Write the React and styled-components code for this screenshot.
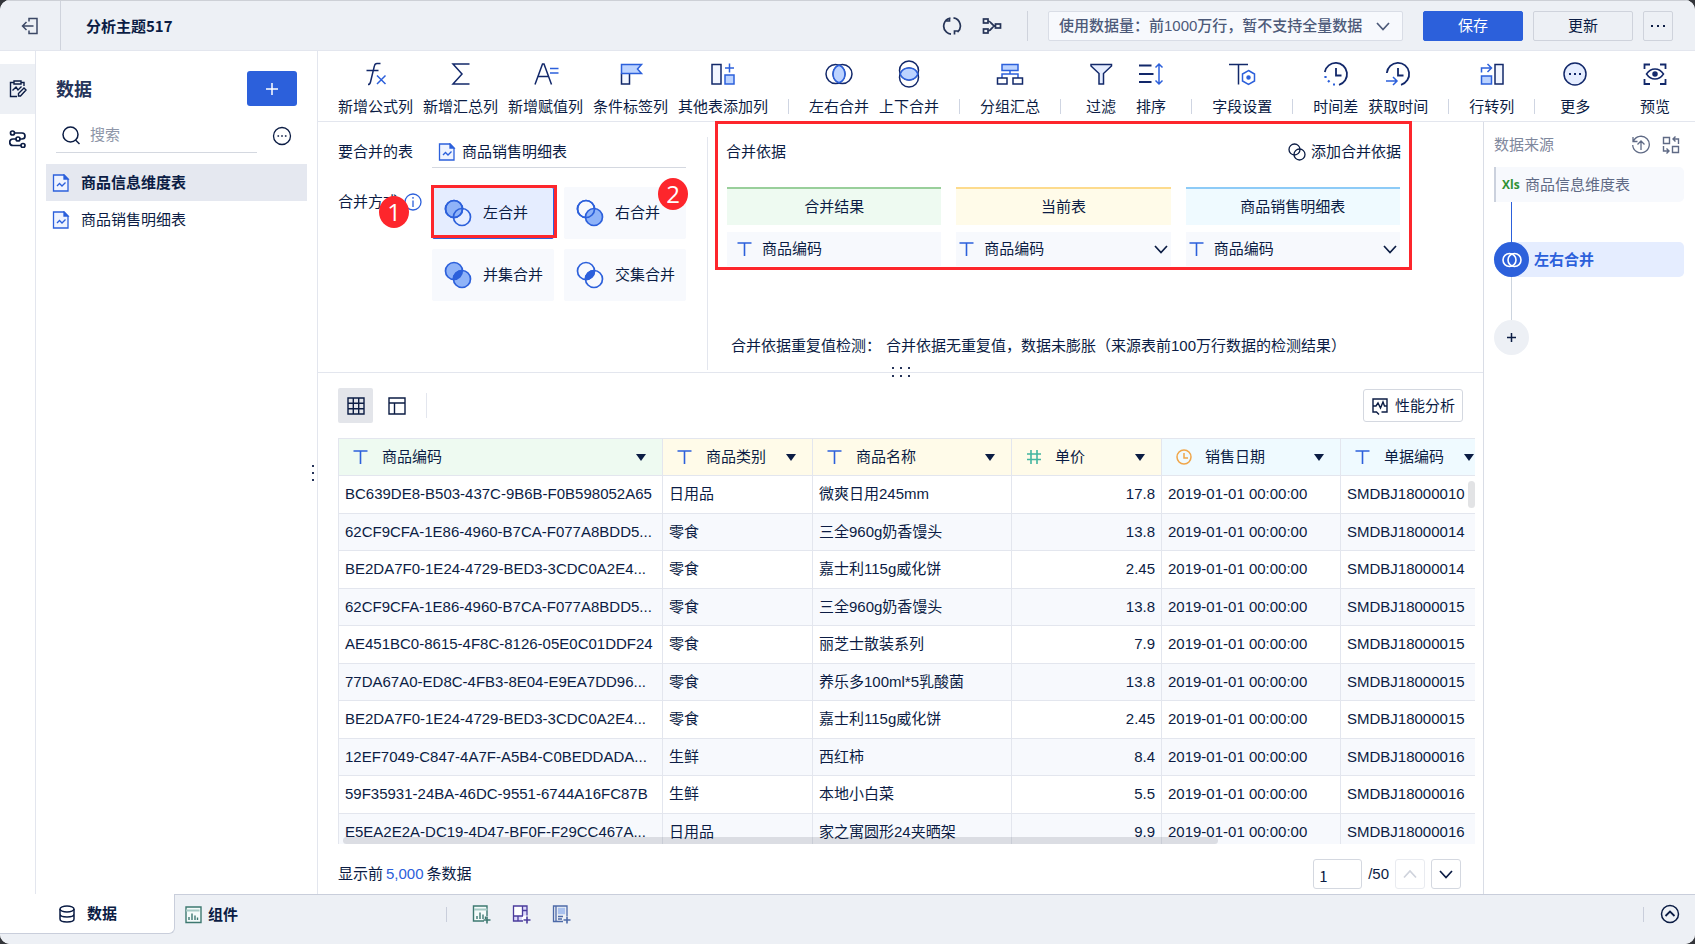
import React, { useState } from "react";
import styled, { createGlobalStyle, css } from "styled-components";

const NAVY = "#12286a";
const INK = "#0b1c44";
const BLUE = "#2c60db";
const LIGHT = "#bcd3ff";
const LINE = "#e3e6ee";

/* ---------- icons ---------- */

const Icon = ({ size = 20, box = size, color = INK, width = 1.5, children }) => (
  <svg width={size} height={size} viewBox={`0 0 ${box} ${box}`} fill="none"
    stroke={color} strokeWidth={width} aria-hidden="true">
    {children}
  </svg>
);

const Tool = ({ children }) => <Icon size={28} color={NAVY}>{children}</Icon>;

const toolIcons = {
  formula: (
    <Tool>
      <path d="M18.5 3.5H15c-1.6 0-2.3 1-2.6 2.4L8.5 22c-.3 1.5-.8 2.5-2.5 2.5M4.500 10.5h12" />
      <path d="M15 15.5l8.5 8.5M23.5 15.5L15 24" stroke={BLUE} />
    </Tool>
  ),
  sum: <Tool><path d="M22.5 4H6l9 10-9 10h16.5" /></Tool>,
  assign: (
    <Tool>
      <path d="M3 24.5L10.500 4H12l7.5 20.500M6 16.5h11" />
      <path d="M18 8.5h8.500M18 13h8.500" stroke={BLUE} />
    </Tool>
  ),
  flag: (
    <Tool>
      <path d="M4.500 13.5V24h8V13.5" fill="#f2f6ff" />
      <path d="M4.500 4.5h20l-4 4.500 4 4.500h-20z" fill={LIGHT} stroke={BLUE} />
    </Tool>
  ),
  addColumn: (
    <Tool>
      <rect x="3" y="4.5" width="9" height="19.5" fill="#f2f6ff" />
      <path d="M20.500 3.5v9M16 8h9" stroke={BLUE} />
      <rect x="16" y="15" width="9" height="9" fill={LIGHT} stroke={BLUE} />
    </Tool>
  ),
  joinH: (
    <Tool>
      <circle cx="10.5" cy="14" r="9.5" /><circle cx="17.5" cy="14" r="9.5" />
      <path d="M14 5.200a9.5 9.5 0 0 1 0 17.600a9.5 9.5 0 0 1 0-17.600z" fill={LIGHT} stroke={BLUE} />
    </Tool>
  ),
  joinV: (
    <Tool>
      <g transform="rotate(90 14 14)">
        <circle cx="10.5" cy="14" r="9.5" /><circle cx="17.5" cy="14" r="9.5" />
        <path d="M14 5.200a9.5 9.5 0 0 1 0 17.600a9.5 9.5 0 0 1 0-17.600z" fill={LIGHT} stroke={BLUE} />
      </g>
    </Tool>
  ),
  group: (
    <Tool>
      <rect x="6" y="4.5" width="16" height="6" fill={LIGHT} stroke={BLUE} />
      <path d="M14 10.5V14M6 18v-4h16v4" stroke={BLUE} />
      <rect x="1.5" y="18" width="9.5" height="6" /><rect x="17" y="18" width="9.5" height="6" />
    </Tool>
  ),
  filter: (
    <Tool><path d="M4 4.5h20.5V6l-8 7.5V24H12V13.5L4 6z" fill="#e5edff" /></Tool>
  ),
  sort: (
    <Tool>
      <path d="M2 5.5h12.5M2 14h14.5M2 22h12.5" strokeWidth="1.8" />
      <path d="M22 4v20M18.5 7.5L22 4l3.5 3.5M18.5 20.5L22 24l3.5-3.5" stroke={BLUE} />
    </Tool>
  ),
  field: (
    <Tool>
      <path d="M1 4.5h19M10.5 4.5v20" />
      <path d="M20.5 10.5l6 3.500v7l-6 3.500-6-3.500v-7z" stroke={BLUE} />
      <circle cx="20.5" cy="17.5" r="1.5" fill={BLUE} stroke={BLUE} />
    </Tool>
  ),
  timeDiff: (
    <Tool>
      <path d="M2.800 12A11.200 11.200 0 1 1 17 24.800" strokeWidth="1.8" />
      <path d="M14 8v7.5h5.5" strokeWidth="1.8" />
      <path d="M3.5 16v2M6 20.5L7.5 22M11 24.5h2" stroke={BLUE} strokeWidth="2.2" />
    </Tool>
  ),
  getTime: (
    <Tool>
      <path d="M2.800 13A11.200 11.200 0 1 1 17 24.800" strokeWidth="1.8" />
      <path d="M14 8v7.5h5.5" strokeWidth="1.8" />
      <path d="M2 21h10.5M9 17l4 4-4 4" stroke={BLUE} />
    </Tool>
  ),
  pivot: (
    <Tool>
      <path d="M3.5 12.5V8h9M9.5 4l4 4-4 4" stroke={BLUE} />
      <rect x="3.5" y="16" width="10" height="8" fill={LIGHT} stroke={BLUE} />
      <rect x="17" y="4.5" width="8" height="19.5" fill="#f2f6ff" />
    </Tool>
  ),
  more: (
    <Tool>
      <circle cx="14" cy="14" r="11" fill="#e5edff" />
      <path d="M8 14h2M13 14h2M18 14h2" strokeWidth="2" />
    </Tool>
  ),
  preview: (
    <Tool>
      <path d="M3.5 9V4.5H9M19 4.5h5.5V9M24.5 19v5H19M9 24H3.5v-5" strokeWidth="1.8" />
      <path d="M5.5 14c2.5-3.700 5.200-5 8.500-5s6 1.300 8.500 5c-2.500 3.700-5.200 5-8.500 5s-6-1.300-8.500-5z" />
      <circle cx="14" cy="14" r="2" fill={NAVY} />
    </Tool>
  ),
};

const ExitIcon = () => (
  <Icon size={18} color="#3c4866">
    <path d="M8 4.500v-3h8v15H8v-3M12.500 9h-11M5.500 5l-4 4 4 4" />
  </Icon>
);

const SyncIcon = () => (
  <Icon color="#263457" width={1.7}>
    <path d="M4.500 16.200A8.200 8.200 0 0 1 8.500 2M3 5h4.500V1.500M11.500 1.900a8.200 8.200 0 0 1 4 14.300M17 15h-4.500v3.500M4.500 16.200a8.200 8.200 0 0 0 4.500 2" />
  </Icon>
);

const FlowIcon = () => (
  <Icon color="#263457" width={1.7}>
    <rect x="1.5" y="3" width="4.500" height="4" /><rect x="1.5" y="13" width="4.500" height="4" />
    <rect x="13.5" y="8" width="5" height="4" />
    <path d="M6 5c3.500 0 3.500 5 7.500 5M6 15c3.500 0 3.500-5 7.500-5" />
  </Icon>
);

const ClipboardIcon = () => (
  <Icon size={18} width={1.4}>
    <path d="M8 16.500H1.500v-14H5M12 2.500h3V6M5 1h7v3H5zM3.500 10.500L7 7l2 3 3.500-3.500" />
    <path d="M9.500 13.500l5.500-5.500 2 2-5.500 6H9.500z" />
  </Icon>
);

const NodesIcon = () => (
  <Icon size={18} width={1.7}>
    <circle cx="3.5" cy="3" r="2" /><circle cx="9" cy="9" r="2" /><circle cx="14" cy="15.5" r="2" />
    <path d="M5.5 3H13a3 3 0 0 1 0 6h-2M7 9H4a3.200 3.200 0 0 0 0 6.500h8" />
  </Icon>
);

const SearchIcon = () => (
  <Icon><circle cx="9.5" cy="9.5" r="7.5" /><path d="M14.5 15l4 4" /></Icon>
);

const DotsCircleIcon = () => (
  <Icon width={1.3}>
    <circle cx="10" cy="10" r="8.5" />
    <path d="M5.500 10h1.600M9.200 10h1.600M12.900 10h1.600" strokeWidth="1.6" />
  </Icon>
);

/* document page with a folded corner */
const SheetIcon = () => (
  <Icon size={18} color={BLUE} width={1.3}>
    <path d="M1.500 1h10.500l4 4v12H1.500z" fill="#eef3ff" />
    <path d="M12 1v4h4z" fill={BLUE} />
    <path d="M5 12l2.500-2.500L10 12l3.500-3.500" />
  </Icon>
);

const Chevron = ({ up, color = INK }) => (
  <Icon size={16} color={color} width={1.7}>
    <path d={up ? "M2 11.500l6-6.500 6 6.500" : "M2 5l6 6.500L14 5"} />
  </Icon>
);

const TypeIcon = ({ type = "text" }) => {
  if (type === "number") {
    return (
      <Icon size={16} color="#43b5a0" width={1.6}>
        <path d="M1 5h14M1 10.500h14M5 1v14M11 1v14" />
      </Icon>
    );
  }
  if (type === "date") {
    return (
      <Icon size={16} color="#f0a64a">
        <circle cx="8" cy="8" r="7" /><path d="M8 4v5h4" />
      </Icon>
    );
  }
  return <Icon size={16} color={BLUE} width={1.6}><path d="M.5 2h14M7.500 2v13" /></Icon>;
};

const VennIcon = ({ kind }) => {
  const soft = "#8fb3f8";
  return (
    <Icon size={28} color={BLUE} width={1.7}>
      <circle cx="10" cy="10" r="8.5" fill={kind === "left" || kind === "union" ? soft : "none"} />
      <circle cx="18" cy="18" r="8.5" fill={kind === "right" || kind === "union" ? soft : "none"} />
      {kind === "left" || kind === "right" ? (
        <circle cx="10" cy="10" r="8.5" />
      ) : (
        <path d="M18.300 9.500a8.5 8.5 0 0 1-8.800 8.800a8.5 8.5 0 0 1 8.800-8.800z" fill={BLUE} />
      )}
    </Icon>
  );
};

const BarsSheetIcon = ({ plus }) => (
  <Icon color="#3d7870" width={1.4}>
    <path d={plus ? "M12 17H1.500V2H15v10" : "M2 2h15v15.500H2z"} fill="#f4fbfa" />
    <path d="M2 5.500h13.500" stroke="#a5c9c4" strokeWidth="2" />
    <path d="M5 15v-3M8 15V8.500M11 15v-4.500M13.500 15v-2.500" />
    {plus && <path d="M15 12.500v7M11.500 16h7" strokeWidth="1.6" />}
  </Icon>
);

/* ---------- styles ---------- */

const GlobalStyle = createGlobalStyle`
  * { box-sizing: border-box; }
  body {
    margin: 0;
    background: #33353a;
    color: ${INK};
    font: 15px/22px "Liberation Sans", "Noto Sans CJK SC", sans-serif;
  }
  button, input, select { font: inherit; color: inherit; }
  button { padding: 0; border: 0; background: none; cursor: pointer; }
  svg { display: block; flex: none; }
`;

const Shell = styled.div`
  display: flex;
  flex-direction: column;
  height: 100vh;
  overflow: hidden;
  border-radius: 10px;
  background: #fff;
`;

const Header = styled.header`
  display: flex;
  align-items: center;
  flex: none;
  height: 51px;
  padding-right: 22px;
  border-top: 1px solid #cdd0d6;
  border-bottom: 1px solid ${LINE};
  background: #edf0f5;
`;

const ExitButton = styled.button`
  display: flex;
  align-items: center;
  justify-content: center;
  width: 61px;
  height: 100%;
  border-right: 1px solid #cfd3dc;
`;

const Title = styled.h1`
  flex: 1;
  margin: 0 0 0 25px;
  font: 700 15px/22px "Noto Sans CJK SC", sans-serif;
`;

const HeaderTools = styled.div`
  display: flex;
  align-items: center;
  gap: 20px;
  height: 30px;
  padding-right: 25px;
  margin-right: 20px;
  border-right: 1px solid #cfd3dc;
`;

const IconButton = styled.button`
  display: flex;
  align-items: center;
  justify-content: center;
`;

const SelectWrap = styled.div`
  position: relative;
  flex: ${(p) => (p.$grow ? 1 : "none")};
  min-width: 0;
  & > svg {
    position: absolute;
    top: 50%;
    right: ${(p) => (p.$grow ? 0 : "12px")};
    transform: translateY(-50%);
    pointer-events: none;
  }
`;

const DataRange = styled.select`
  width: 355px;
  height: 30px;
  padding: 0 32px 0 10px;
  border: 1px solid #d9dde6;
  border-radius: 2px;
  background: #f7f9fd;
  color: #4d5a79;
  font-weight: 500;
  appearance: none;
`;

const HeaderButton = styled.button`
  display: flex;
  align-items: center;
  justify-content: center;
  width: ${(p) => (p.$square ? 30 : 100)}px;
  height: 30px;
  margin-left: ${(p) => (p.$primary ? 20 : 10)}px;
  border: 1px solid ${(p) => (p.$primary ? BLUE : "#cfd3dc")};
  border-radius: 2px;
  ${(p) => p.$primary && css`
    background: ${BLUE};
    color: #fff;
  `}
`;

const Body = styled.div`
  display: flex;
  flex: 1;
  min-height: 0;
`;

const Rail = styled.nav`
  flex: none;
  width: 36px;
  padding-top: 13px;
  border-right: 1px solid ${LINE};
`;

const RailButton = styled(IconButton)`
  width: 100%;
  height: 50px;
  background: ${(p) => (p.$active ? "#edf0f5" : "none")};
`;

const Sidebar = styled.aside`
  position: relative;
  flex: none;
  width: 282px;
  border-right: 1px solid ${LINE};
`;

const SidebarHead = styled.div`
  display: flex;
  align-items: center;
  justify-content: space-between;
  padding: 20px 20px 0;
  h2 { margin: 0; font-size: 18px; line-height: 24px; padding-top: 2px; color: #26345a; }
`;

const AddButton = styled(IconButton)`
  width: 50px;
  height: 35px;
  border-radius: 3px;
  background: ${BLUE};
`;

const SearchRow = styled.div`
  display: flex;
  align-items: center;
  gap: 15px;
  padding: 12px 25px 0 20px;
`;

const SearchBox = styled.label`
  display: flex;
  align-items: center;
  flex: 1;
  gap: 9px;
  height: 35px;
  padding-left: 5px;
  border-bottom: 1px solid #d4d8e0;
  input {
    width: 100%;
    padding: 0;
    border: 0;
    outline: 0;
    background: none;
  }
  input::placeholder { color: #8e96a8; }
`;

const TableList = styled.ul`
  margin: 11px 10px 0;
  padding: 0;
  list-style: none;
`;

const TableItem = styled.button`
  display: flex;
  align-items: center;
  gap: 11px;
  width: 100%;
  height: 37px;
  padding-left: 6px;
  background: ${(p) => (p.$active ? "#e5e8f0" : "none")};
  font-weight: ${(p) => (p.$active ? 700 : 400)};
`;

const SideGrip = styled.div`
  position: absolute;
  top: 50%;
  right: 3px;
  display: grid;
  gap: 5px;
  transform: translateY(-50%);
  i { width: 2px; height: 2px; background: #26345a; }
`;

const Workspace = styled.main`
  display: flex;
  flex-direction: column;
  flex: 1;
  min-width: 0;
`;

const Toolbar = styled.div`
  display: flex;
  flex: none;
  height: 71px;
  padding: 9px 15px 0;
  border-bottom: 1px solid ${LINE};
`;

const ToolGroup = styled.div`
  display: flex;
  & + &::before {
    content: "";
    width: 1px;
    height: 15px;
    margin: 39px 15px 0;
    background: #cfd5e2;
  }
`;

const ToolButton = styled.button`
  display: flex;
  flex-direction: column;
  align-items: center;
  gap: 8px;
  min-width: 50px;
  height: 58px;
  padding: 0 5px;
  white-space: nowrap;
  margin-left: ${(p) => (p.$end ? "auto" : 0)};
`;

const Content = styled.div`
  display: flex;
  flex: 1;
  min-height: 0;
`;

const Center = styled.div`
  display: flex;
  flex-direction: column;
  flex: 1;
  min-width: 0;
`;

const MergePanel = styled.section`
  position: relative;
  display: flex;
  flex: none;
  height: 251px;
  padding: 15px 0 2px;
  border-bottom: 1px solid ${LINE};
`;

const MergeForm = styled.div`
  display: grid;
  grid-template-columns: 94px 1fr;
  grid-template-rows: 31px auto;
  row-gap: 19px;
  align-content: start;
  flex: none;
  width: 390px;
  padding: 0 21px 0 20px;
  border-right: 1px solid ${LINE};
`;

const FormLabel = styled.div`
  position: relative;
  display: flex;
  align-items: center;
  gap: 6px;
  height: 29px;
  white-space: nowrap;
`;

const PickedTable = styled.button`
  display: flex;
  align-items: center;
  gap: 6px;
  padding-left: 6px;
  border-bottom: 1px solid #d4d8e0;
`;

const Methods = styled.div`
  position: relative;
  display: grid;
  grid-template-columns: 1fr 1fr;
  gap: 10px;
`;

const MethodButton = styled.button`
  display: flex;
  align-items: center;
  gap: 11px;
  height: 52px;
  padding-left: 11px;
  border: 1px solid ${(p) => (p.$active ? BLUE : "#f7f9fd")};
  border-radius: 2px;
  background: ${(p) => (p.$active ? "#e5edff" : "#f7f9fd")};
  white-space: nowrap;
`;

/* red callouts laid over the form */
const Outline = styled.div`
  position: absolute;
  border: 3px solid #fd262c;
  pointer-events: none;
`;

const MethodOutline = styled(Outline)`
  top: -2px;
  left: -1px;
  width: 126px;
  height: 53px;
`;

const BasisOutline = styled(Outline)`
  top: -16px;
  right: 71px;
  left: 7px;
  height: 149px;
`;

const Badge = styled.span`
  position: absolute;
  top: ${(p) => p.$top}px;
  left: ${(p) => p.$left}px;
  width: 30px;
  height: 32px;
  border-radius: 50%;
  background: #fd262c;
  color: #fff;
  font: 24px/32px "Open Sans", sans-serif;
  text-align: center;
`;

const Basis = styled.div`
  position: relative;
  display: flex;
  flex-direction: column;
  flex: 1;
  min-width: 0;
  padding: 0 82px 9px 18px;
`;

const BasisHead = styled.div`
  display: flex;
  align-items: center;
  justify-content: space-between;
  height: 30px;
  margin-bottom: 20px;
`;

const AddBasis = styled.button`
  display: flex;
  align-items: center;
  gap: 5px;
`;

const BasisGrid = styled.div`
  display: grid;
  grid-template-columns: repeat(3, 1fr);
  gap: 7px 15px;
  margin: 0 1px;
`;

const BasisTitle = styled.div`
  height: 38px;
  border-top: 2px solid ${(p) => p.$line};
  background: ${(p) => p.$bg};
  line-height: 36px;
  text-align: center;
`;

const BasisField = styled.div`
  display: flex;
  align-items: center;
  gap: 9px;
  height: 34px;
  padding: 0 2px 0 ${(p) => (p.$result ? 10 : 3)}px;
  background: #f7f9fd;
`;

const FieldSelect = styled.select`
  width: 100%;
  height: 30px;
  padding: 0;
  border: 0;
  background: none;
  appearance: none;
`;

const Notice = styled.p`
  display: flex;
  gap: 5px;
  margin: auto 0 4px 5px;
  white-space: nowrap;
`;

const PanelGrip = styled.div`
  position: absolute;
  bottom: -5px;
  left: 50%;
  display: grid;
  grid-template-columns: repeat(3, 2px);
  gap: 6px;
  transform: translateX(-50%);
  i { height: 2px; background: #26345a; }
`;

const ViewBar = styled.div`
  display: flex;
  align-items: center;
  flex: none;
  height: 65px;
  padding: 0 20px;
`;

const ViewButton = styled(IconButton)`
  width: 35px;
  height: 35px;
  margin-right: 6px;
  border-radius: 2px;
  background: ${(p) => (p.$active ? "#e3e5ea" : "none")};
`;

const ViewDivider = styled.span`
  width: 1px;
  height: 25px;
  margin-left: 6px;
  background: ${LINE};
`;

const PerfButton = styled.button`
  display: flex;
  align-items: center;
  justify-content: center;
  gap: 6px;
  width: 100px;
  height: 33px;
  margin-left: auto;
  border: 1px solid #d4d8e0;
  border-radius: 3px;
`;

const Grid = styled.div`
  position: relative;
  flex: 1;
  min-height: 0;
  margin: 0 8px 0 20px;
  overflow: hidden;
`;

const DataTable = styled.table`
  width: 1153px;
  height: 413px;
  border-top: 1px solid ${LINE};
  border-left: 1px solid ${LINE};
  border-spacing: 0;
  table-layout: fixed;
  white-space: nowrap;
`;

const HeadCell = styled.th`
  height: 37px;
  padding: 0;
  border-right: 1px solid ${LINE};
  border-bottom: 1px solid ${LINE};
  background: ${(p) => p.$bg};
  font-weight: 400;
`;

const HeadInner = styled.div`
  display: flex;
  align-items: center;
  gap: 13px;
  padding: 0 16px 0 14px;
`;

const Caret = styled.button`
  margin-left: auto;
  border: 5px solid transparent;
  border-top: 7px solid ${INK};
  border-bottom: 0;
`;

const Cell = styled.td`
  padding: 0 6px;
  border-right: 1px solid ${LINE};
  border-bottom: 1px solid ${LINE};
  text-align: ${(p) => (p.$right ? "right" : "left")};
  tr:nth-child(even) > & { background: #f7f9fd; }
`;

const Thumb = styled.div`
  position: absolute;
  border-radius: 4px;
  background: rgba(20, 25, 40, 0.12);
`;

const ThumbX = styled(Thumb)`
  bottom: 0;
  left: 5px;
  width: 77%;
  height: 7px;
`;

const ThumbY = styled(Thumb)`
  top: 43px;
  right: 0;
  width: 7px;
  height: 27px;
`;

const Pager = styled.div`
  display: flex;
  align-items: center;
  gap: 6px;
  flex: none;
  height: 50px;
  padding: 10px 22px 0 20px;
  p { flex: 1; margin: 0; }
  em { color: ${BLUE}; font-style: normal; margin: 0 3px; }
`;

const PageInput = styled.input`
  width: 49px;
  height: 30px;
  padding: 2px 5px 0;
  border: 1px solid #d4d8e0;
  border-radius: 3px;
  font-family: "Noto Sans CJK SC", sans-serif;
`;

const PageButton = styled(IconButton)`
  width: 30px;
  height: 30px;
  border: 1px solid ${(p) => (p.disabled ? "#e9ebf0" : "#d4d8e0")};
  border-radius: 3px;
`;

const SourcePanel = styled.aside`
  flex: none;
  width: 212px;
  padding: 8px 11px 0 10px;
  border-left: 1px solid #d9dde6;
`;

const SourceHead = styled.div`
  display: flex;
  align-items: center;
  gap: 10px;
  height: 30px;
  padding-right: 3px;
  color: #7f889d;
  span { flex: 1; }
`;

const SourceNode = styled.div`
  display: flex;
  align-items: center;
  gap: 5px;
  height: 35px;
  margin-top: 7px;
  padding-left: 6px;
  border-left: 2px solid #cbd1dd;
  border-radius: 0 5px 5px 0;
  background: #f7f9fd;
  color: #5f6a85;
`;

const XlsMark = styled.span`
  width: 18px;
  color: #2f9235;
  font: 700 12px/20px "Open Sans", "Liberation Sans", sans-serif;
`;

const Link = styled.div`
  width: 1px;
  height: ${(p) => p.$height}px;
  margin-left: 17px;
  background: ${(p) => p.$color};
`;

const StepNode = styled.button`
  display: flex;
  align-items: center;
  gap: 5px;
  width: 100%;
  height: 35px;
  border-radius: 18px 5px 5px 18px;
  background: #e5edff;
  color: ${BLUE};
  font-weight: 700;
`;

const StepDot = styled.span`
  display: flex;
  align-items: center;
  justify-content: center;
  width: 35px;
  height: 35px;
  border-radius: 50%;
  background: ${BLUE};
`;

const NextStep = styled(IconButton)`
  width: 35px;
  height: 35px;
  border-radius: 50%;
  background: #edf0f5;
`;

const BottomBar = styled.footer`
  display: flex;
  align-items: flex-start;
  flex: none;
  height: 50px;
  border-top: 1px solid #c9cedb;
  background: #edf0f5;
`;

const Tab = styled.button`
  display: flex;
  align-items: center;
  gap: ${(p) => (p.$active ? 10 : 4)}px;
  height: 40px;
  padding-left: 9px;
  font-weight: 700;
  ${(p) => p.$active && css`
    width: 175px;
    margin-top: -1px;
    padding-left: 57px;
    border-right: 1px solid #c9cedb;
    border-bottom: 1px solid #c9cedb;
    border-bottom-right-radius: 6px;
    background: #fff;
  `}
`;

const AddSheets = styled.div`
  display: flex;
  align-items: center;
  gap: 20px;
  height: 38px;
  margin-left: 208px;
  &::before {
    content: "";
    width: 1px;
    height: 15px;
    margin-right: 5px;
    background: #c9cedb;
  }
`;

const Collapse = styled(IconButton)`
  gap: 16px;
  height: 38px;
  margin: 0 15px 0 auto;
  &::before {
    content: "";
    width: 1px;
    height: 15px;
    background: #c9cedb;
  }
`;

/* ---------- data ---------- */

const tools = [
  [["formula", "新增公式列"], ["sum", "新增汇总列"], ["assign", "新增赋值列"], ["flag", "条件标签列"], ["addColumn", "其他表添加列"]],
  [["joinH", "左右合并"], ["joinV", "上下合并"]],
  [["group", "分组汇总"]],
  [["filter", "过滤"], ["sort", "排序"]],
  [["field", "字段设置"]],
  [["timeDiff", "时间差"], ["getTime", "获取时间"]],
  [["pivot", "行转列"]],
  [["more", "更多"]],
];

const methods = [
  ["left", "左合并"],
  ["right", "右合并"],
  ["union", "并集合并"],
  ["inner", "交集合并"],
];

const GREEN_BG = "#eefaf1";
const YELLOW_BG = "#fffbe9";
const BLUE_BG = "#effaff";

const basisTitles = [
  ["合并结果", "#99cf9b", GREEN_BG],
  ["当前表", "#fddb8d", YELLOW_BG],
  ["商品销售明细表", "#8dcbf7", BLUE_BG],
];

const columns = [
  { name: "商品编码", type: "text", bg: GREEN_BG, width: 324 },
  { name: "商品类别", type: "text", bg: YELLOW_BG, width: 150 },
  { name: "商品名称", type: "text", bg: YELLOW_BG, width: 199 },
  { name: "单价", type: "number", bg: YELLOW_BG, width: 150 },
  { name: "销售日期", type: "date", bg: BLUE_BG, width: 179 },
  { name: "单据编码", type: "text", bg: BLUE_BG, width: 150 },
];

const DATE = "2019-01-01 00:00:00";
const rows = [
  ["BC639DE8-B503-437C-9B6B-F0B598052A65", "日用品", "微爽日用245mm", "17.8", DATE, "SMDBJ18000010"],
  ["62CF9CFA-1E86-4960-B7CA-F077A8BDD5...", "零食", "三全960g奶香馒头", "13.8", DATE, "SMDBJ18000014"],
  ["BE2DA7F0-1E24-4729-BED3-3CDC0A2E4...", "零食", "嘉士利115g威化饼", "2.45", DATE, "SMDBJ18000014"],
  ["62CF9CFA-1E86-4960-B7CA-F077A8BDD5...", "零食", "三全960g奶香馒头", "13.8", DATE, "SMDBJ18000015"],
  ["AE451BC0-8615-4F8C-8126-05E0C01DDF24", "零食", "丽芝士散装系列", "7.9", DATE, "SMDBJ18000015"],
  ["77DA67A0-ED8C-4FB3-8E04-E9EA7DD96...", "零食", "养乐多100ml*5乳酸菌", "13.8", DATE, "SMDBJ18000015"],
  ["BE2DA7F0-1E24-4729-BED3-3CDC0A2E4...", "零食", "嘉士利115g威化饼", "2.45", DATE, "SMDBJ18000015"],
  ["12EF7049-C847-4A7F-A5B4-C0BEDDADA...", "生鲜", "西红柿", "8.4", DATE, "SMDBJ18000016"],
  ["59F35931-24BA-46DC-9551-6744A16FC87B", "生鲜", "本地小白菜", "5.5", DATE, "SMDBJ18000016"],
  ["E5EA2E2A-DC19-4D47-BF0F-F29CC467A...", "日用品", "家之寓圆形24夹晒架", "9.9", DATE, "SMDBJ18000016"],
];

/* ---------- parts ---------- */

const TopBar = () => (
  <Header>
    <ExitButton aria-label="退出"><ExitIcon /></ExitButton>
    <Title>分析主题517</Title>
    <HeaderTools>
      <IconButton aria-label="同步"><SyncIcon /></IconButton>
      <IconButton aria-label="血缘"><FlowIcon /></IconButton>
    </HeaderTools>
    <SelectWrap>
      <DataRange aria-label="使用数据量">
        <option>使用数据量：前1000万行，暂不支持全量数据</option>
      </DataRange>
      <Chevron color="#4d5a79" />
    </SelectWrap>
    <HeaderButton $primary>保存</HeaderButton>
    <HeaderButton>更新</HeaderButton>
    <HeaderButton $square aria-label="更多操作">
      <Icon size={16} width={2}><path d="M1 8h2M7 8h2M13 8h2" /></Icon>
    </HeaderButton>
  </Header>
);

const LeftSide = () => (
  <>
    <Rail>
      <RailButton $active aria-label="编辑"><ClipboardIcon /></RailButton>
      <RailButton aria-label="流程"><NodesIcon /></RailButton>
    </Rail>
    <Sidebar>
      <SidebarHead>
        <h2>数据</h2>
        <AddButton aria-label="添加">
          <Icon size={16} color="#fff"><path d="M8 2v12M2 8h12" /></Icon>
        </AddButton>
      </SidebarHead>
      <SearchRow>
        <SearchBox>
          <SearchIcon />
          <input type="text" placeholder="搜索" aria-label="搜索" />
        </SearchBox>
        <IconButton aria-label="更多"><DotsCircleIcon /></IconButton>
      </SearchRow>
      <TableList>
        <li><TableItem $active><SheetIcon />商品信息维度表</TableItem></li>
        <li><TableItem><SheetIcon />商品销售明细表</TableItem></li>
      </TableList>
      <SideGrip><i /><i /><i /></SideGrip>
    </Sidebar>
  </>
);

const Merge = () => {
  const [method, setMethod] = useState("left");

  return (
    <MergePanel>
      <MergeForm>
        <FormLabel>要合并的表</FormLabel>
        <PickedTable><SheetIcon />商品销售明细表</PickedTable>
        <FormLabel>
          合并方式
          <Icon size={18} color={BLUE} width={1.3}>
            <circle cx="9" cy="9" r="8" /><path d="M9 7.500V14M9 4v1.800" />
          </Icon>
          <Badge $top={9} $left={41}>1</Badge>
        </FormLabel>
        <Methods>
          {methods.map(([kind, label]) => (
            <MethodButton key={kind} $active={method === kind}
              aria-pressed={method === kind} onClick={() => setMethod(kind)}>
              <VennIcon kind={kind} />
              {label}
            </MethodButton>
          ))}
          <MethodOutline />
          <Badge $top={-9} $left={226}>2</Badge>
        </Methods>
      </MergeForm>
      <Basis>
        <BasisHead>
          合并依据
          <AddBasis>
            <Icon size={18} width={1.3}>
              <circle cx="6.5" cy="6.5" r="5.5" /><circle cx="11.5" cy="11.5" r="5.5" />
            </Icon>
            添加合并依据
          </AddBasis>
        </BasisHead>
        <BasisGrid>
          {basisTitles.map(([name, line, bg]) => (
            <BasisTitle key={name} $line={line} $bg={bg}>{name}</BasisTitle>
          ))}
          <BasisField $result><TypeIcon />商品编码</BasisField>
          {["当前表", "商品销售明细表"].map((name) => (
            <BasisField key={name}>
              <TypeIcon />
              <SelectWrap $grow>
                <FieldSelect aria-label={name}><option>商品编码</option></FieldSelect>
                <Chevron />
              </SelectWrap>
            </BasisField>
          ))}
        </BasisGrid>
        <Notice>
          <span>合并依据重复值检测：</span>
          <span>合并依据无重复值，数据未膨胀（来源表前100万行数据的检测结果）</span>
        </Notice>
        <BasisOutline />
      </Basis>
      <PanelGrip><i /><i /><i /><i /><i /><i /></PanelGrip>
    </MergePanel>
  );
};

const Preview = () => (
  <>
    <ViewBar>
      <ViewButton $active aria-label="表格视图">
        <Icon size={18} width={1.4}><path d="M1 1h16v16H1zM6.300 1v16M11.700 1v16M1 6.300h16M1 11.700h16" /></Icon>
      </ViewButton>
      <ViewButton aria-label="结构视图">
        <Icon size={18} width={1.4}><path d="M1 1h16v16H1zM1 6h16M6.500 6v11" /></Icon>
      </ViewButton>
      <ViewDivider />
      <PerfButton>
        <Icon size={18} width={1.4}>
          <path d="M10.500 15H16V2H2v13h3.500L8 17.500M2 9h3l2-3 2.500 5 2.500-6 1.500 4H16" />
        </Icon>
        性能分析
      </PerfButton>
    </ViewBar>
    <Grid>
      <DataTable>
        <colgroup>
          {columns.map((c) => <col key={c.name} width={c.width} />)}
        </colgroup>
        <thead>
          <tr>
            {columns.map((c) => (
              <HeadCell key={c.name} $bg={c.bg}>
                <HeadInner>
                  <TypeIcon type={c.type} />
                  {c.name}
                  <Caret aria-label={`${c.name}筛选`} />
                </HeadInner>
              </HeadCell>
            ))}
          </tr>
        </thead>
        <tbody>
          {rows.map((row, i) => (
            <tr key={i}>
              {row.map((value, j) => (
                <Cell key={j} $right={columns[j].type === "number"}>{value}</Cell>
              ))}
            </tr>
          ))}
        </tbody>
      </DataTable>
      <ThumbX />
      <ThumbY />
    </Grid>
    <Pager>
      <p>显示前<em>5,000</em>条数据</p>
      <PageInput defaultValue="1" aria-label="页码" />
      <span>/50</span>
      <PageButton disabled aria-label="上一页"><Chevron up color="#cfd3dc" /></PageButton>
      <PageButton aria-label="下一页"><Chevron /></PageButton>
    </Pager>
  </>
);

const Sources = () => (
  <SourcePanel>
    <SourceHead>
      <span>数据来源</span>
      <IconButton aria-label="更新来源">
        <Icon color="#5f6a85" width={1.3}>
          <path d="M2.500 6A8.300 8.300 0 1 1 1.700 10M2 2v4.500h4.500M10 15V6M6.500 9.500L10 6l3.500 3.500" />
        </Icon>
      </IconButton>
      <IconButton aria-label="替换来源">
        <Icon color="#5f6a85" width={1.4}>
          <path d="M2.500 2.500h6v6h-6zM11.500 11.500h6v6h-6zM12 4h5.500v5M14.500 1.500L12 4l2.500 2.500M8 16H2.500v-5M5.500 13.500L8 16l-2.500 2.500" />
        </Icon>
      </IconButton>
    </SourceHead>
    <SourceNode><XlsMark>Xls</XlsMark>商品信息维度表</SourceNode>
    <Link $height={40} $color={BLUE} />
    <StepNode>
      <StepDot>
        <Icon color="#fff" width={1.6}>
          <circle cx="7.5" cy="10" r="6.5" /><circle cx="12.5" cy="10" r="6.5" />
        </Icon>
      </StepDot>
      左右合并
    </StepNode>
    <Link $height={43} $color="#ccd4de" />
    <NextStep aria-label="添加步骤">
      <Icon size={11}><path d="M5.500 1v9M1 5.500h9" /></Icon>
    </NextStep>
  </SourcePanel>
);

const Tabs = () => (
  <BottomBar>
    <Tab $active>
      <Icon>
        <ellipse cx="10" cy="5" rx="7" ry="3" />
        <path d="M3 5v10c0 4 14 4 14 0V5M3 10c0 4 14 4 14 0" />
      </Icon>
      数据
    </Tab>
    <Tab><BarsSheetIcon />组件</Tab>
    <AddSheets>
      <IconButton aria-label="添加组件"><BarsSheetIcon plus /></IconButton>
      <IconButton aria-label="添加仪表板">
        <Icon color="#4a3b9c" width={1.3}>
          <path d="M1.500 2H15v15H1.500z" fill="#fff" stroke="none" />
          <path d="M10.500 2H15v9.500h-4.500zM1.500 12H10v5H1.500z" fill="#dcd8fb" stroke="none" />
          <path d="M11 17H1.500V2H15v9.500M10.500 2v10M1.500 12h9.500M6 12v5M10.500 6.500H15" />
          <path d="M15 12.500v7M11.500 16h7" strokeWidth="1.6" />
        </Icon>
      </IconButton>
      <IconButton aria-label="添加报告">
        <Icon color="#4c69a8" width={1.3}>
          <path d="M11 17.500H1.500V2H15v10M4 2v15.500" />
          <path d="M6.500 4.500h6v5h-6z" fill="#a9c1ee" stroke="#a9c1ee" />
          <path d="M6 12.500h5M6 15h4" />
          <path d="M15 12.500v7M11.500 16h7" strokeWidth="1.6" />
        </Icon>
      </IconButton>
    </AddSheets>
    <Collapse aria-label="展开">
      <Icon><circle cx="10" cy="10" r="8.5" /><path d="M5.500 12L10 7.500l4.500 4.500" strokeWidth="1.8" /></Icon>
    </Collapse>
  </BottomBar>
);

const App = () => {
  return (
    <>
      <GlobalStyle />
      <Shell>
        <TopBar />
        <Body>
          <LeftSide />
          <Workspace>
            <Toolbar>
              {tools.map((group) => (
                <ToolGroup key={group[0][0]}>
                  {group.map(([icon, label]) => (
                    <ToolButton key={icon}>{toolIcons[icon]}{label}</ToolButton>
                  ))}
                </ToolGroup>
              ))}
              <ToolButton $end>{toolIcons.preview}预览</ToolButton>
            </Toolbar>
            <Content>
              <Center>
                <Merge />
                <Preview />
              </Center>
              <Sources />
            </Content>
          </Workspace>
        </Body>
        <Tabs />
      </Shell>
    </>
  );
};

export default App;
